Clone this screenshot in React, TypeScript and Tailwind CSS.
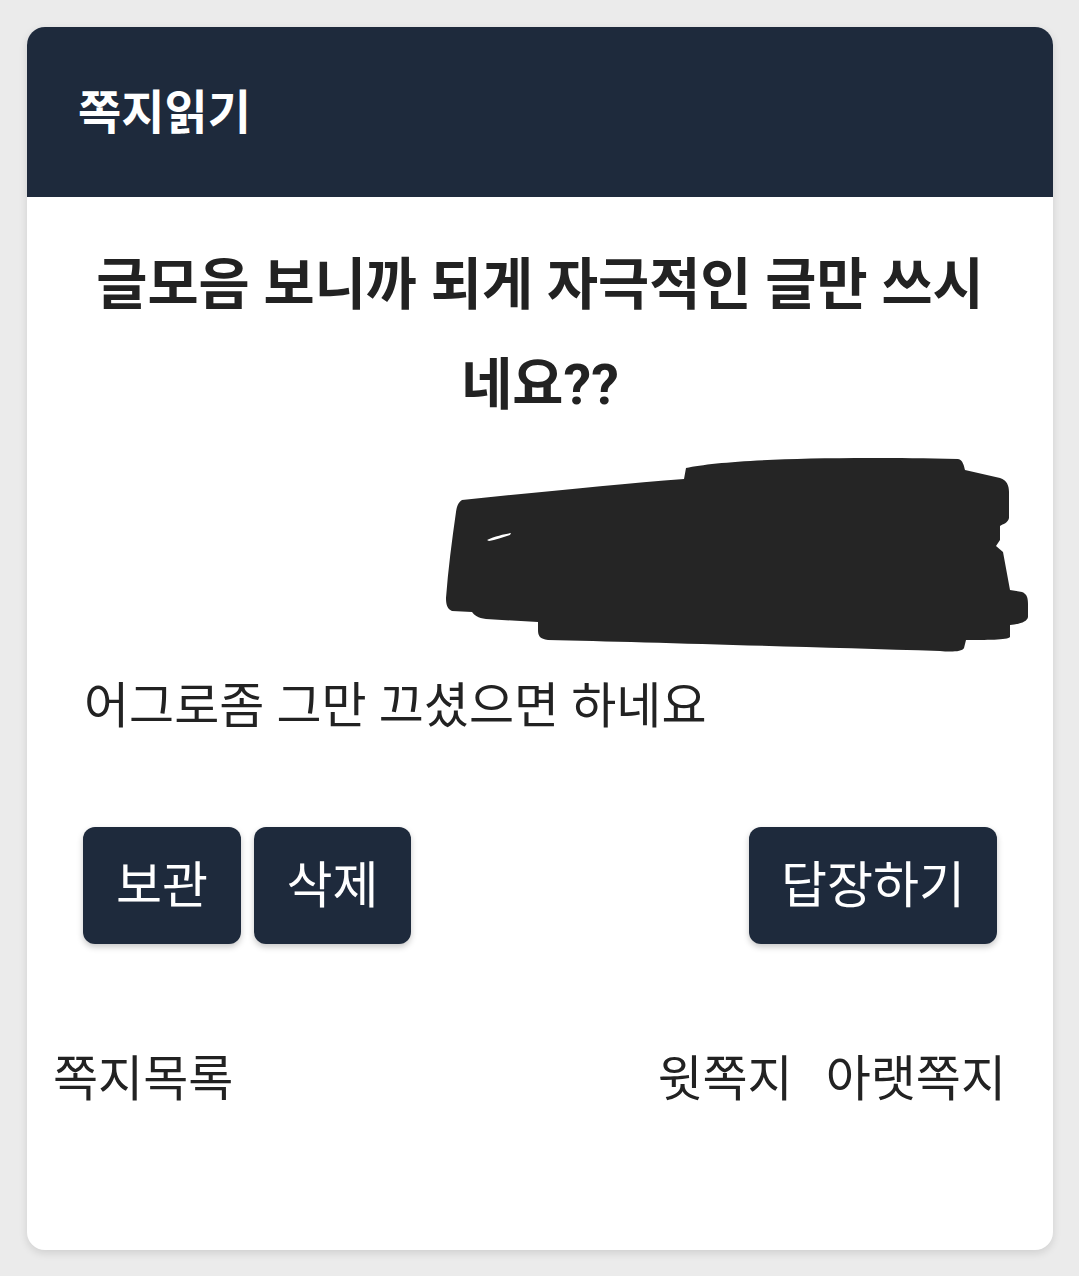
import React from 'react';

const FONT = 'font-[Roboto,"Noto_Sans_CJK_KR",sans-serif]';

// scribble that hides the sender's name
const Redaction = () => (
  <svg width="600" height="210" viewBox="440 450 600 210" className="block">
    <path
      fill="#252525"
      d="M462 500 C 540 492, 620 484, 684 479 L 686 468 C 720 461, 800 456, 958 459 C 963 460, 964 466, 965 470 L 1000 478 C 1007 480, 1009 486, 1009 492 L 1009 518 C 1008 523, 1003 524, 1000 526 L 1000 540 L 996 546 L 1003 552 L 1010 590 L 1022 592 C 1027 594, 1028 598, 1028 604 L 1028 617 C 1027 622, 1020 624, 1010 625 L 1010 637 C 1008 640, 985 640, 966 640 L 964 648 C 962 652, 950 652, 940 651 C 800 647, 640 642, 548 640 C 540 639, 538 636, 538 630 L 538 622 L 486 619 C 478 618, 474 615, 472 612 L 452 611 C 447 609, 446 604, 446 598 C 448 570, 452 540, 456 512 C 457 505, 459 502, 462 500 Z"
    />
    <path fill="#ffffff" d="M487 540 C 495 536, 505 534, 511 533 L 510 535 C 503 537, 495 540, 489 541 Z" />
  </svg>
);

const NavyButton = ({ children, className = '' }: { children: React.ReactNode; className?: string }) => (
  <button
    className={`h-[117px] rounded-[12px] bg-[#1e2a3c] text-white text-[50px] leading-none shadow-[0_3px_6px_rgba(0,0,0,0.22)] ${className}`}
  >
    {children}
  </button>
);

export default function App() {
  return (
    <div className={`min-h-[1276px] w-[1079px] bg-[#ebebeb] pt-[27px] ${FONT}`}>
      <div className="mx-[27px] w-[1026px] overflow-hidden rounded-[18px] bg-white shadow-[0_3px_8px_rgba(0,0,0,0.12)]">
        {/* header */}
        <div className="flex h-[170px] items-center bg-[#1e2a3c] pl-[51px]">
          <h1 className="text-[47px] font-bold leading-none text-white">쪽지읽기</h1>
        </div>

        {/* subject */}
        <h2 className="px-[56px] pt-[38px] text-center text-[55.6px] font-bold leading-[100px] text-[#222]">
          글모음 보니까 되게 자극적인 글만 쓰시네요??
        </h2>

        <div className="mt-[15px] pl-[413px]">
          <Redaction />
        </div>

        {/* body */}
        <p className="mt-[17px] pl-[57px] text-[49px] leading-[60px] text-[#222]">어그로좀 그만 끄셨으면 하네요</p>

        {/* actions */}
        <div className="mt-[90px] flex items-center px-[56px]">
          <div className="flex gap-[13px]">
            <NavyButton className="w-[158px]">보관</NavyButton>
            <NavyButton className="w-[157px]">삭제</NavyButton>
          </div>
          <NavyButton className="ml-auto w-[248px]">답장하기</NavyButton>
        </div>

        {/* navigation */}
        <div className="mt-[106px] flex items-center pb-[140px] pl-[26px] pr-[47px] text-[49px] leading-[60px] text-[#222]">
          <a>쪽지목록</a>
          <div className="ml-auto flex gap-[33px]">
            <a>윗쪽지</a>
            <a>아랫쪽지</a>
          </div>
        </div>
      </div>
    </div>
  );
}
